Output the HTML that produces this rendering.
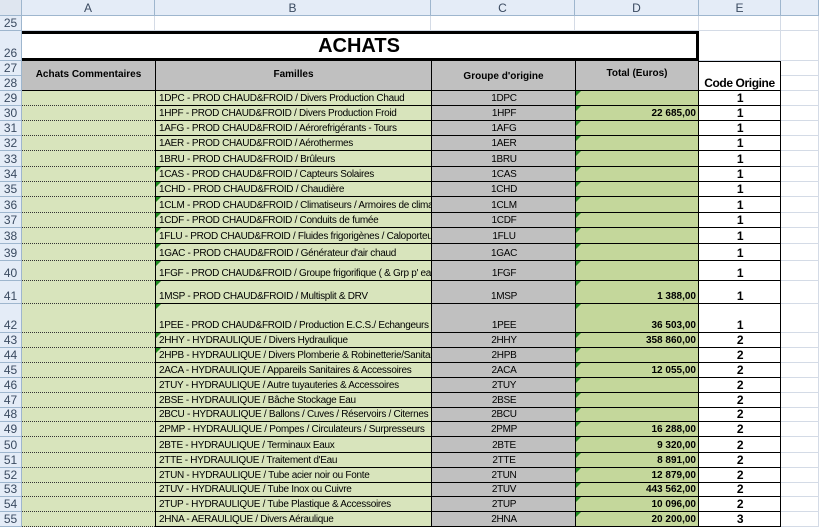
<!DOCTYPE html>
<html><head><meta charset="utf-8"><style>
*{margin:0;padding:0;box-sizing:border-box}
body{width:819px;height:522px;overflow:hidden;background:#fff;font-family:"Liberation Sans",Arial,sans-serif;position:relative}
.c{position:absolute;overflow:hidden;white-space:nowrap;font-size:10px;letter-spacing:-0.3px;display:flex;align-items:flex-end;padding:0 2px 1px 3px}
.h{position:absolute;background:#e4ecf7;color:#3a4a60;font-size:12px;display:flex;align-items:center;justify-content:center;border-right:1px solid #9eb6ce;border-bottom:1px solid #9eb6ce}
.rn{position:absolute;left:0;width:22px;background:#e4ecf7;color:#3a4a60;font-size:12px;border-bottom:1px solid #9eb6ce;border-right:1px solid #9eb6ce;display:flex;align-items:flex-end;justify-content:center;padding-bottom:0}
.tri{position:absolute;left:0;top:0;width:0;height:0;border-top:5px solid #1e8a1e;border-right:5px solid transparent}
.g{position:absolute;border-right:1px solid #d4dbe6;border-bottom:1px solid #d4dbe6}
</style></head><body>
<div class="h" style="left:0;top:0;width:22px;height:16px;background:#dfe6f0"></div>
<div class="h" style="left:22px;top:0;width:133px;height:16px">A</div>
<div class="h" style="left:155px;top:0;width:276px;height:16px">B</div>
<div class="h" style="left:431px;top:0;width:144px;height:16px">C</div>
<div class="h" style="left:575px;top:0;width:124px;height:16px">D</div>
<div class="h" style="left:699px;top:0;width:82px;height:16px">E</div>
<div class="h" style="left:781px;top:0;width:38px;height:16px"></div>
<div id="g"></div>
<script>
var rows=[[25,16,31],[26,31,61],[27,61,76],[28,76,91],[29,91,106],[30,106,121],[31,121,136],[32,136,151],[33,151,167],[34,167,182],[35,182,197],[36,197,213],[37,213,228],[38,228,244],[39,244,261],[40,261,281],[41,281,304],[42,304,333],[43,333,348],[44,348,363],[45,363,378],[46,378,393],[47,393,408],[48,408,422],[49,422,437],[50,437,453],[51,453,468],[52,468,483],[53,483,497],[54,497,512],[55,512,527]];
var B=["1DPC - PROD CHAUD&amp;FROID / Divers Production Chaud","1HPF - PROD CHAUD&amp;FROID / Divers Production Froid","1AFG - PROD CHAUD&amp;FROID / Aérorefrigérants - Tours","1AER - PROD CHAUD&amp;FROID / Aérothermes","1BRU - PROD CHAUD&amp;FROID / Brûleurs","1CAS - PROD CHAUD&amp;FROID / Capteurs Solaires","1CHD - PROD CHAUD&amp;FROID / Chaudière","1CLM - PROD CHAUD&amp;FROID / Climatiseurs / Armoires de climatisation","1CDF - PROD CHAUD&amp;FROID / Conduits de fumée","1FLU - PROD CHAUD&amp;FROID / Fluides frigorigènes / Caloporteurs","1GAC - PROD CHAUD&amp;FROID / Générateur d'air chaud","1FGF - PROD CHAUD&amp;FROID / Groupe frigorifique ( &amp; Grp p' eau glacée)","1MSP - PROD CHAUD&amp;FROID / Multisplit &amp; DRV","1PEE - PROD CHAUD&amp;FROID / Production E.C.S./ Echangeurs","2HHY - HYDRAULIQUE / Divers Hydraulique","2HPB - HYDRAULIQUE / Divers Plomberie &amp; Robinetterie/Sanitaire","2ACA - HYDRAULIQUE / Appareils Sanitaires &amp; Accessoires","2TUY - HYDRAULIQUE / Autre tuyauteries &amp; Accessoires","2BSE - HYDRAULIQUE / Bâche Stockage Eau","2BCU - HYDRAULIQUE / Ballons / Cuves / Réservoirs / Citernes","2PMP - HYDRAULIQUE / Pompes / Circulateurs / Surpresseurs","2BTE - HYDRAULIQUE / Terminaux Eaux","2TTE - HYDRAULIQUE / Traitement d'Eau","2TUN - HYDRAULIQUE / Tube acier noir ou Fonte","2TUV - HYDRAULIQUE / Tube Inox ou Cuivre","2TUP - HYDRAULIQUE / Tube Plastique &amp; Accessoires","2HNA - AERAULIQUE / Divers Aéraulique"];
var D={30:"22 685,00",41:"1 388,00",42:"36 503,00",43:"358 860,00",45:"12 055,00",49:"16 288,00",50:"9 320,00",51:"8 891,00",52:"12 879,00",53:"443 562,00",54:"10 096,00",55:"20 200,00"};
var h="";
rows.forEach(function(r){var n=r[0],t=r[1],ht=r[2]-r[1];
h+='<div class="rn" style="top:'+t+'px;height:'+ht+'px">'+n+'</div>';
if(n==25){[[22,133],[155,276],[431,144],[575,124],[699,82],[781,38]].forEach(function(c){h+='<div class="g" style="left:'+c[0]+'px;top:'+t+'px;width:'+c[1]+'px;height:'+ht+'px"></div>'});return;}
if(n==26){h+='<div style="position:absolute;left:22px;top:31px;width:677px;height:30px;border:3px solid #000;border-left:none;font-weight:bold;font-size:20px;display:flex;align-items:center;justify-content:center;padding-top:1px;background:#fff">ACHATS</div>';h+='<div class="g" style="left:699px;top:31px;width:82px;height:30px"></div><div class="g" style="left:781px;top:31px;width:38px;height:30px"></div>';return;}
if(n==27){h+='<div class="g" style="left:781px;top:'+t+'px;width:38px;height:15px"></div>';return;}
if(n==28){h+='<div class="g" style="left:781px;top:'+t+'px;width:38px;height:15px"></div>';return;}
var i=n-29,bt=B[i];
h+='<div class="c" style="left:22px;top:'+t+'px;width:133px;height:'+ht+'px;background:#d8e4bc;border-bottom:1px dotted #333"></div>';
h+='<div class="c" style="left:155px;top:'+t+'px;width:276px;height:'+ht+'px;background:#d8e4bc;border-left:1px solid #000;border-bottom:1px solid #000">'+((n>=34&&n<=44)?'<span class="tri"></span>':'')+bt+'</div>';
h+='<div class="c" style="left:431px;top:'+t+'px;width:144px;height:'+ht+'px;background:#c0c0c0;border-left:1px solid #000;border-bottom:1px solid #000;justify-content:center">'+bt.split(" ")[0]+'</div>';
h+='<div class="c" style="left:575px;top:'+t+'px;width:124px;height:'+ht+'px;background:#c4d79b;border-left:1px solid #000;border-bottom:1px solid #000;border-right:1px solid #000;justify-content:flex-end;font-weight:bold;letter-spacing:0"><span class="tri"></span>'+(D[n]||"")+'</div>';
h+='<div class="c" style="left:699px;top:'+t+'px;width:82px;height:'+ht+'px;background:#fff;border-bottom:1px solid #000;border-right:1px solid #000;justify-content:center;font-weight:bold;font-size:12px;padding-bottom:0">'+(n<=42?1:n<=54?2:3)+'</div>';
h+='<div class="g" style="left:781px;top:'+t+'px;width:38px;height:'+ht+'px"></div>';
});
h+='<div style="position:absolute;left:22px;top:61px;width:133px;height:30px;background:#c0c0c0;border-bottom:1px solid #000;font-weight:bold;font-size:10px;display:flex;justify-content:center;padding-top:8px">Achats Commentaires</div>';
h+='<div style="position:absolute;left:155px;top:61px;width:276px;height:30px;background:#c0c0c0;border-left:1px solid #000;border-bottom:1px solid #000;font-weight:bold;font-size:10px;display:flex;justify-content:center;padding-top:8px">Familles</div>';
h+='<div style="position:absolute;left:431px;top:61px;width:144px;height:30px;background:#c0c0c0;border-left:1px solid #000;border-bottom:1px solid #000;font-weight:bold;font-size:10px;display:flex;justify-content:center;padding-top:10px">Groupe d\'origine</div>';
h+='<div style="position:absolute;left:575px;top:61px;width:124px;height:30px;background:#c0c0c0;border-left:1px solid #000;border-right:1px solid #000;border-bottom:1px solid #000;font-weight:bold;font-size:10px;display:flex;justify-content:center;padding-top:7px">Total (Euros)</div>';
h+='<div style="position:absolute;left:699px;top:61px;width:82px;height:30px;background:#fff;border-top:1px solid #000;border-right:1px solid #000;border-bottom:1px solid #000;font-weight:bold;font-size:12px;display:flex;justify-content:center;align-items:flex-end;padding-bottom:0;letter-spacing:-0.4px">Code Origine</div>';
document.getElementById("g").innerHTML=h;
</script>
</body></html>
